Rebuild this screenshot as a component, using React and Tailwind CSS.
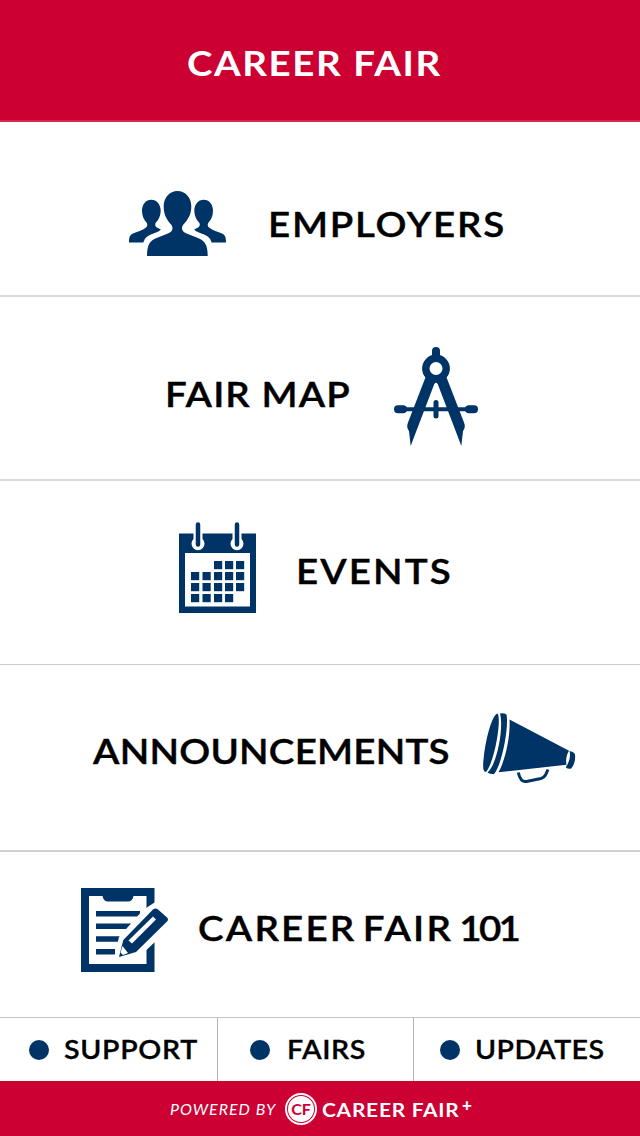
const NAVY = "#003366";

const SIDE_PERSON =
  "M22.300 8.700c5.500 0 9.400 4.800 9.400 11 0 5-2 9-5.200 12.300-1 3.300.7 4.500 5.400 6.500-2 2.500-7 3.500-11 5.500-4 2-5.500 4-6.500 7.500H0c0-6 1-7.500 4-9 4-2 9.500-3 13-6 1.600-1.400 1.500-3 .8-4.500C15 28.700 13 25 13 19.700c0-6.200 3.700-11 9.300-11z";

const PeopleIcon = () => (
  <svg width="98" height="66" viewBox="0 0 98 66" fill={NAVY} className="shrink-0">
    <path d={SIDE_PERSON} />
    <path d={SIDE_PERSON} transform="translate(97 0) scale(-1 1)" />
    <path d="M48.500 0C56.500 0 62.300 6.500 62.300 15.500c0 8-3.300 13-8.300 18.500-2 3.500-1 6.500 3 8.200 4 2 8.500 3 12.500 5 6 2.800 9.200 6 9.200 17.800H18c0-11.800 3-15 9-17.800 4-2 8.500-3 12.500-5 4-1.700 5-4.700 3-8.200C37.500 28.500 34.700 23.500 34.700 15.500 34.700 6.500 40.500 0 48.500 0z" />
  </svg>
);

const CompassIcon = () => (
  <svg width="84" height="100" viewBox="0 0 84 100" className="shrink-0">
    <path d="M42 4v6" stroke={NAVY} strokeWidth="8" strokeLinecap="round" />
    <circle cx="42" cy="21.500" r="10.200" fill="none" stroke={NAVY} strokeWidth="7.400" />
    <path d="M8 62.200h68" stroke={NAVY} strokeWidth="4" />
    <path d="M4 62.200h5M75 62.200h5" stroke={NAVY} strokeWidth="8" strokeLinecap="round" />
    <path
      d="M32 29L14 75.500q-2 5 1 8.500l1.700 15L23.500 81 40.300 37q1.700-3 3.400 0L60.500 81l6.800 18L69 84q3-3.500 1-8.500L52 29 42 33z"
      fill={NAVY}
    />
    <path d="M42 55.500v13.500" stroke={NAVY} strokeWidth="5" strokeLinecap="round" />
  </svg>
);

const CELLS = [
  [35, 39], [46, 39], [57, 39],
  [12, 50], [23.500, 50], [35, 50], [46, 50], [57, 50],
  [12, 61], [23.500, 61], [35, 61], [46, 61], [57, 61],
  [12, 72], [23.500, 72], [35, 72], [46, 72],
];

const CalendarIcon = () => (
  <svg width="77" height="91" viewBox="0 0 77 91" className="shrink-0">
    <path d="M0 11.500h77V91H0z" fill={NAVY} />
    <path d="M6 31h65v53.500H6z" fill="#fff" />
    <path d="M14.500 10h9v7a6.500 6.500 0 1 1-9 0zM53.500 10h9v7a6.500 6.500 0 1 1-9 0z" fill="#fff" />
    <path
      d="M19 2.500v20M58 2.500v20"
      stroke={NAVY}
      strokeWidth="4.500"
      strokeLinecap="round"
    />
    {CELLS.map(([x, y]) => (
      <rect key={`${x}-${y}`} x={x} y={y} width="8.200" height="8.200" fill={NAVY} />
    ))}
  </svg>
);

const MegaphoneIcon = () => (
  <svg width="93" height="72" viewBox="0 0 93 72" fill={NAVY} className="shrink-0">
    <path d="M14.500.5C18.500 4 13 45 3.500 58.500 0 60-.5 54 .8 44 3 25 9 2 14.500.5z" />
    <path d="M17 .5q3.500-.8 6.500 1C26 14 19 52 11 61q-3.500.5-6.500-1.500C14 52 21 14 17 .5z" />
    <path d="M26.500 6.500L86 37.800c-2.500 4-3.500 9-2.500 14L15.500 59.200C23 46 27.500 22 26.500 6.500z" />
    <path d="M86.500 38q4 .5 5.400 3c.8 5-.2 10-3.700 14.500q-3 1-5.500-1.300C86 49.500 88 44 86.500 38z" />
    <path
      d="M35.300 59.500q1 5 3.200 7.500 2 2 5 1.500l14.500-3q3-.8 4.500-3.500l2.500-5.500"
      fill="none"
      stroke={NAVY}
      strokeWidth="3"
    />
  </svg>
);

const NotesIcon = () => (
  <svg width="88" height="85" viewBox="0 0 88 85" className="shrink-0">
    <path d="M0 0h73.500v84H0z" fill={NAVY} />
    <path d="M8 8h13.500c.5 3.500 2.500 5.500 5.500 5.500h20c3 0 5-2 5.500-5.500h13v68H8z" fill="#fff" />
    <path
      d="M15 25.700h44M15 38.300h35M15 51h24M15 63.800h19"
      stroke={NAVY}
      strokeWidth="5.500"
    />
    <path d="M75 13.500L62 22 38 49l-6 25 24-3 10-9.500 22-21V13.500z" fill="#fff" />
    <path
      d="M38 69l4.300-17L72 21.500q2.500-2 5 0l9 8q2 2 0 4L55 64z"
      fill={NAVY}
    />
    <path d="M47.500 52.500L72 28.500l3 3L51 55.500zM41.500 58l5.500 7-5 2-2.500-2.500z" fill="#fff" />
  </svg>
);

const LABEL =
  "block text-black font-semibold text-[35px] leading-none whitespace-nowrap origin-left scale-x-110 [-webkit-text-stroke:0.4px_#000]";

const TAB_LABEL = "origin-left scale-x-110 pb-[2px] [-webkit-text-stroke:0.3px_#000]";

const Dot = () => <span className="size-5 rounded-full bg-[#003366] shrink-0" />;

const App = () => {
  return (
    <div className="w-[640px] h-[1136px] bg-white flex flex-col overflow-hidden font-['Lato',sans-serif]">
      <header className="h-[122px] shrink-0 bg-[#cc0033] border-b-2 border-[#d42a50] pl-[187px] pt-[45px]">
        <h1 className="text-white font-bold text-[35px] leading-none tracking-[1.4px] whitespace-nowrap origin-left scale-x-110">
          CAREER FAIR
        </h1>
      </header>

      <main className="shrink-0">
        <div className="h-[175px] border-b-2 border-[#d9d9d9] flex items-start pl-[129px]">
          <div className="pt-[69px]">
            <PeopleIcon />
          </div>
          <span className={`${LABEL} ml-[41px] pt-[84px] tracking-[1.6px]`}>EMPLOYERS</span>
        </div>
        <div className="h-[184px] border-b-2 border-[#d9d9d9] flex items-start pl-[165px]">
          <span className={`${LABEL} w-[229px] pt-[79px] tracking-[1px]`}>FAIR MAP</span>
          <div className="pt-[50px]">
            <CompassIcon />
          </div>
        </div>
        <div className="h-[184px] border-b border-[#cccccc] flex items-start pl-[179px]">
          <div className="pt-[41px]">
            <CalendarIcon />
          </div>
          <span className={`${LABEL} ml-[40px] pt-[72px] tracking-[1.9px]`}>EVENTS</span>
        </div>
        <div className="h-[187px] border-b-2 border-[#d0d0d0] flex items-start pl-[93px]">
          <span className={`${LABEL} w-[390px] pt-[68px] tracking-[0.2px]`}>ANNOUNCEMENTS</span>
          <div className="pt-[48px]">
            <MegaphoneIcon />
          </div>
        </div>
        <div className="h-[166px] border-b border-[#c4c4c4] flex items-start pl-[81px]">
          <div className="pt-[36px]">
            <NotesIcon />
          </div>
          <span className={`${LABEL} ml-[29px] pt-[58px] tracking-[2px] [word-spacing:-5px]`}>
            CAREER FAIR <span className="tracking-[-2.5px]">101</span>
          </span>
        </div>
      </main>

      <nav className="h-[63px] shrink-0 flex text-black font-semibold text-[26px] leading-none whitespace-nowrap">
        <div className="w-[218px] border-r border-[#b3b3b3] flex items-center pl-[29px] gap-[15px]">
          <Dot />
          <span className={`${TAB_LABEL} tracking-[0.6px]`}>SUPPORT</span>
        </div>
        <div className="w-[196px] border-r border-[#b3b3b3] flex items-center pl-8 gap-[17px]">
          <Dot />
          <span className={`${TAB_LABEL} tracking-[0.5px]`}>FAIRS</span>
        </div>
        <div className="flex-1 flex items-center pl-[26px] gap-[15px]">
          <Dot />
          <span className={`${TAB_LABEL} tracking-[0.4px]`}>UPDATES</span>
        </div>
      </nav>

      <footer className="flex-1 bg-[#cc0033] text-white flex items-center pl-[170px] leading-none whitespace-nowrap">
        <span className="w-[115px] italic text-[16px] tracking-[1px]">POWERED BY</span>
        <span className="size-8 rounded-full border-2 border-white p-[1px] shrink-0">
          <span className="size-full rounded-full bg-white text-[#cc0033] font-bold text-[16px] flex items-center justify-center">
            CF
          </span>
        </span>
        <span className="ml-[5px] pt-[2px] w-[140px] font-bold text-[19px] tracking-[0.7px] origin-left scale-x-110">
          CAREER FAIR
        </span>
        <span className="font-black text-[17px] -mt-[9px]">+</span>
      </footer>
    </div>
  );
};

export default App;
